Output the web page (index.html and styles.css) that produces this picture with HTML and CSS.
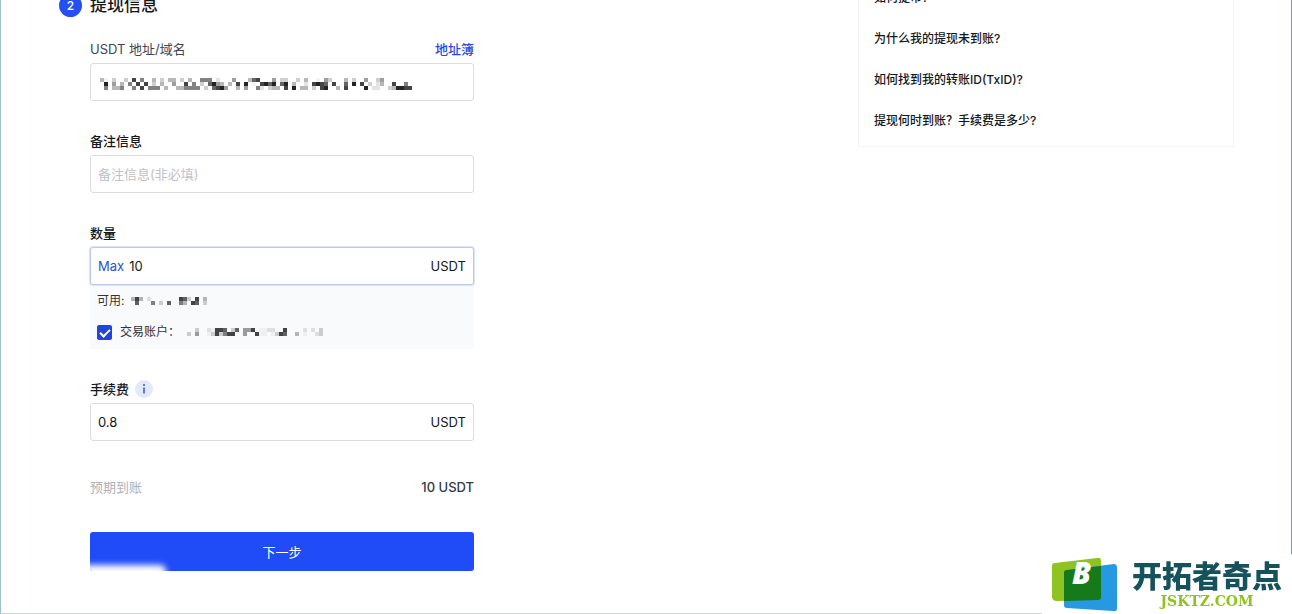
FILE: index.html
```html
<!DOCTYPE html>
<html lang="zh-CN">
<head>
    <meta charset="UTF-8">
    <meta name="viewport" content="width=device-width, initial-scale=1.0">
    <title>提现</title>
    <link rel="stylesheet" href="styles.css">
</head>
<body>

    <main class="page">
        <form class="withdraw">
            <h2 class="step"><span class="step-number">2</span>提现信息</h2>

            <div class="field">
                <div class="field-head">
                    <label class="muted" for="address">USDT 地址/域名</label>
                    <a href="#">地址簿</a>
                </div>
                <div class="input-box">
                    <svg class="mask mask-address" data-mask="address"></svg>
                    <input id="address" type="text">
                </div>
            </div>

            <div class="field">
                <div class="field-head">
                    <label for="remark">备注信息</label>
                </div>
                <div class="input-box">
                    <input id="remark" type="text" placeholder="备注信息(非必填)">
                </div>
            </div>

            <div class="field">
                <div class="field-head">
                    <label for="amount">数量</label>
                </div>
                <div class="input-box active">
                    <button class="max" type="button">Max</button>
                    <input id="amount" type="text" value="10">
                    <span>USDT</span>
                </div>
                <div class="balance">
                    <div class="balance-row">可用:<svg class="mask mask-balance" data-mask="available"></svg></div>
                    <div class="balance-row">
                        <input id="trading" type="checkbox" checked>
                        <label for="trading">交易账户：</label>
                        <svg class="mask mask-balance" data-mask="trading"></svg>
                    </div>
                </div>
            </div>

            <div class="field">
                <div class="field-head">
                    <label for="fee">手续费</label>
                    <svg class="info" viewBox="0 0 18 18">
                        <circle cx="9" cy="9" r="9" fill="#e3e9fd"/>
                        <circle cx="9" cy="5" r="1" fill="#3654cf"/>
                        <path d="M9 7.5V13.5" stroke="#3654cf" stroke-width="1.5"/>
                    </svg>
                </div>
                <div class="input-box">
                    <input id="fee" type="text" value="0.8">
                    <span>USDT</span>
                </div>
            </div>

            <div class="total">
                <span class="total-label">预期到账</span>
                <span class="total-value">10 USDT</span>
            </div>

            <button class="submit" type="button">下一步</button>
        </form>

        <ul class="faq">
            <li><a href="#">如何提币?</a></li>
            <li><a href="#">为什么我的提现未到账?</a></li>
            <li><a href="#">如何找到我的转账ID(TxID)?</a></li>
            <li><a href="#">提现何时到账？手续费是多少?</a></li>
        </ul>
    </main>

    <div class="watermark">
        <svg class="watermark-logo" viewBox="0 0 66 56">
            <path d="M3 6L45 1Q49 0 49 4V40Q49 43 46 43L4 44Q0 43 0 40V9Q0 6 3 6Z" fill="#8fc31f"/>
            <path d="M15 13L62 7Q65 7 65 11V51Q65 55 61 54L15 51Q12 51 12 48V16Q12 13 15 13Z" fill="#2699e2"/>
            <path d="M15 13L49 9V40Q49 43 46 43L12 44V16Q12 13 15 13Z" fill="#16791a"/>
            <text class="logo-letter" x="20" y="27">B</text>
        </svg>
        <div class="watermark-text">
            <div class="watermark-name">开拓者奇点</div>
            <div class="watermark-site">JSKTZ.COM</div>
        </div>
    </div>

    <script src="mask.js"></script>
</body>
</html>
```
FILE: styles.css
```css
* {
    box-sizing: border-box;
}

body {
    margin: 0;
    font-family: Inter, "Noto Sans CJK SC", sans-serif;
    font-size: 13px;
    line-height: 20px;
    color: #15171c;
    background: #fff;
    overflow: hidden;
}

a {
    color: #2448d8;
    text-decoration: none;
}

.page {
    display: flex;
    justify-content: space-between;
    align-items: flex-start;
    min-height: 100vh;
    padding: 0 57px 0 89px;
    border-left: 1px solid #9dbdd3;
    border-right: 1px solid #6a9cc4;
    border-bottom: 1px solid #cbd5d8;
}

.withdraw {
    width: 384px;
}

.step {
    display: flex;
    align-items: center;
    gap: 8px;
    margin: -7px 0 22px -31px;
    font-size: 17px;
    font-weight: 500;
    line-height: 24px;
}

.step-number {
    width: 23px;
    height: 23px;
    border-radius: 50%;
    background: #2350ee;
    color: #fff;
    font-size: 12px;
    line-height: 23px;
    text-align: center;
}

.field {
    margin-bottom: 30px;
}

.field-head {
    display: flex;
    align-items: center;
    gap: 6px;
    margin-bottom: 4px;
    font-weight: 500;
}

.field-head a {
    margin-left: auto;
}

.muted {
    color: #41454f;
    font-weight: 400;
}

.info {
    width: 18px;
    height: 18px;
}

.input-box {
    position: relative;
    display: flex;
    align-items: center;
    gap: 5px;
    height: 38px;
    padding: 0 7px;
    border: 1px solid #dcdde0;
    border-radius: 3px;
    background: #fff;
}

.input-box.active {
    border-color: #bccaf0;
    box-shadow: 0 0 0 1px #dbe3f7;
}

.input-box input {
    flex: 1;
    min-width: 0;
    padding: 0;
    border: 0;
    outline: 0;
    background: none;
    font: inherit;
    color: inherit;
}

.input-box input::placeholder {
    color: #c0c2c7;
    opacity: 1;
}

.max {
    padding: 0;
    border: 0;
    background: none;
    font: inherit;
    color: #2c51cc;
}

.balance {
    height: 64px;
    padding: 6px 7px;
    background: #f9fafc;
    font-size: 12px;
    color: #303339;
}

.balance-row {
    display: flex;
    align-items: center;
    height: 20px;
    margin-bottom: 11px;
}

.balance input {
    appearance: none;
    width: 15px;
    height: 15px;
    margin: 0 8px 0 0;
    border-radius: 2px;
    background: #2044dc;
}

.balance input:checked::before {
    content: "";
    display: block;
    width: 8px;
    height: 4px;
    margin: 4px 3px;
    border-left: 2px solid #fff;
    border-bottom: 2px solid #fff;
    transform: rotate(-45deg);
}

.mask {
    flex: none;
}

.mask-address {
    position: absolute;
    left: 9px;
    top: 14px;
}

.mask-balance {
    margin-left: 7px;
}

.total {
    display: flex;
    justify-content: space-between;
    margin: 36px 0 35px;
}

.total-label {
    color: #afb1b9;
}

.total-value {
    font-weight: 500;
    color: #353942;
}

.submit {
    position: relative;
    display: block;
    width: 100%;
    height: 39px;
    border: 0;
    border-radius: 3px;
    background: #1f4cf7;
    color: #fff;
    font: inherit;
    overflow: hidden;
}

.submit::after {
    content: "";
    position: absolute;
    left: -10px;
    bottom: -7px;
    width: 86px;
    height: 13px;
    border-radius: 6px;
    background: #fff;
    filter: blur(3px);
}

.faq {
    display: flex;
    flex-direction: column;
    gap: 21px;
    width: 376px;
    margin: -29px 0 0;
    padding: 16px 15px 15px;
    border: 1px solid #f4f4f5;
    list-style: none;
    font-size: 12px;
    font-weight: 500;
}

.faq a {
    color: #15171c;
}

/* site mark in the corner of the window */
.watermark {
    position: fixed;
    right: 0;
    bottom: 0;
    display: flex;
    gap: 14px;
    width: 250px;
    height: 60px;
    padding: 3px 0 0 10px;
    background: #fff;
}

.watermark-logo {
    width: 66px;
    height: 56px;
}

.logo-letter {
    font-family: "Open Sans", sans-serif;
    font-size: 30px;
    font-style: italic;
    font-weight: 800;
    fill: #fff;
}

.watermark-text {
    text-align: center;
}

.watermark-name {
    font-family: "Noto Sans CJK SC", sans-serif;
    font-size: 30px;
    font-weight: 900;
    line-height: 34px;
    color: #16525c;
}

.watermark-site {
    margin-top: 2px;
    font-family: "DejaVu Serif", serif;
    font-size: 14px;
    font-weight: 700;
    line-height: 16px;
    color: #8fc31f;
}
```
FILE: mask.js
```js
// Pixelated cover for private values: one digit per 4px cell, 9 is darkest
const masks = {
    address: [
        "41.3..3.8.6..4.3.44.3.4..666.2...5...478...5.33..3.4..1.53...4.3..5..35......",
        ".9.5.4.6.8.8.3.4..5..8.6.3.7954.4.8.9.1.8979.79.4..2.8987.8..7.9.8.3.24..8..6.5.98",
        ".6.446..6.8.666.4..446666.3.7895..4.5..62.344.8.9.44.3.89..4.8....9.22..349988554.6"
    ],
    available: [
        "484.2.......873.8.4",
        ".7...6.3.7..64.87.3"
    ],
    trading: [
        "..3..21887.37.558.1122..8....2.2.3",
        "3.5..1383688..5..811.1387..4.1..23"
    ]
};

document.querySelectorAll("[data-mask]").forEach(svg => {
    const rows = masks[svg.dataset.mask];
    const columns = svg.dataset.mask === "address" ? 78 : rows[0].length;
    svg.setAttribute("width", columns * 4);
    svg.setAttribute("height", rows.length * 4);

    rows.forEach((row, y) => {
        [...row].forEach((cell, x) => {
            if (cell === ".") return;
            const rect = document.createElementNS("http://www.w3.org/2000/svg", "rect");
            rect.setAttribute("x", x * 4);
            rect.setAttribute("y", y * 4);
            rect.setAttribute("width", 4);
            rect.setAttribute("height", 4);
            rect.setAttribute("fill-opacity", (cell / 10) ** 1.4);
            svg.appendChild(rect);
        });
    });
});
```
